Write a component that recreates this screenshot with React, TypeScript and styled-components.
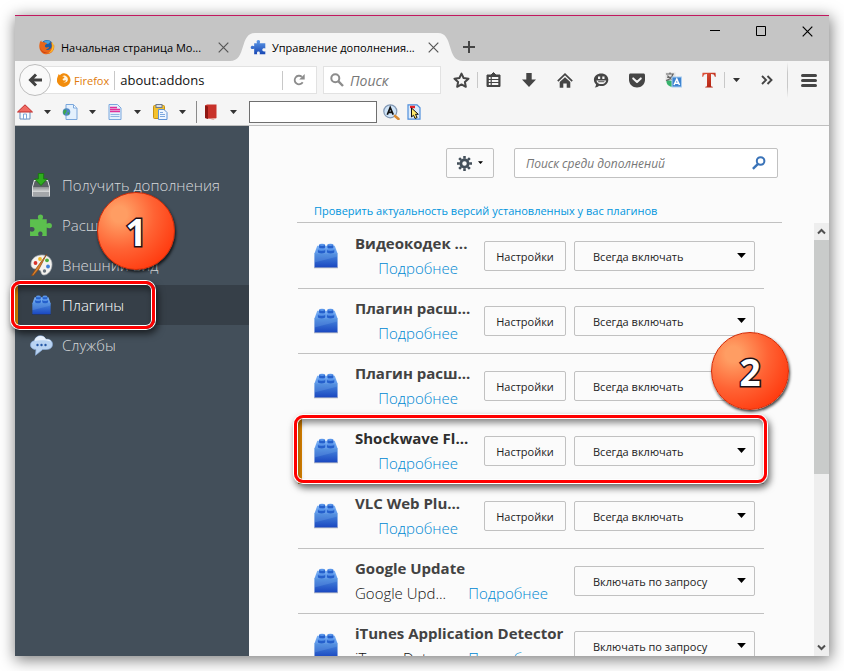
import React from "react";
import styled, { createGlobalStyle, css } from "styled-components";

const GlobalStyle = createGlobalStyle`
  *, *::before, *::after { box-sizing: border-box; }
  body {
    margin: 0;
    background: #fff;
    font-family: "Open Sans", "Noto Sans", sans-serif;
    font-size: 12px;
    color: #333;
  }
  button, input, select { font: inherit; color: inherit; margin: 0; }
  button { background: none; border: 0; padding: 0; }
  svg { display: block; flex: none; }
`;

/* ---------- window frame ---------- */

const Page = styled.div`
  height: 100vh;
  padding: 15px;
  overflow: hidden;
`;

const Window = styled.main`
  height: 100%;
  display: flex;
  flex-direction: column;
  background: #fbfbfb;
  border-top: 1px solid #c2185f;
  box-shadow: 1px 3px 14px 1px rgba(0, 0, 0, 0.5);
`;

const TitleBar = styled.header`
  height: 45px;
  flex: none;
  display: flex;
  align-items: flex-end;
  background: #c5c5c5;
`;

const TabButton = styled.div<{ $active?: boolean }>`
  position: relative;
  display: flex;
  align-items: center;
  width: ${(p) => (p.$active ? 233 : 215)}px;
  height: 28px;
  padding: 0 ${(p) => (p.$active ? 24 : 1)}px 0 ${(p) => (p.$active ? 20 : 24)}px;
`;

const TabShape = styled.span`
  position: absolute;
  inset: 0;
  display: flex;
`;

const TabFill = styled.span`
  flex: 1;
  background: #f5f5f5;
`;

const TabTitle = styled.button`
  position: relative;
  flex: 1;
  min-width: 0;
  display: flex;
  align-items: center;
  gap: 6px;
  font-size: 11px;
  color: #000;
  white-space: nowrap;
`;

const GlyphButton = styled.button`
  position: relative;
  display: flex;
  align-items: center;
  justify-content: center;
`;

const TabClose = styled(GlyphButton)`
  width: 12px;
  height: 12px;
  flex: none;
`;

const NewTab = styled(GlyphButton)`
  width: 12px;
  height: 28px;
`;

const WindowControls = styled.div`
  margin-left: auto;
  align-self: flex-start;
  display: flex;
`;

const ControlButton = styled(GlyphButton)`
  width: 46px;
  height: 30px;
  padding-left: 2px;
`;

/* ---------- toolbars ---------- */

const NavBar = styled.nav`
  height: 38px;
  flex: none;
  display: flex;
  align-items: center;
  padding-left: 4px;
  background: #f5f5f5;
`;

const BackButton = styled(GlyphButton)`
  width: 32px;
  height: 32px;
  flex: none;
  z-index: 1;
  border: 1px solid #bdbdbd;
  border-radius: 50%;
  background: #f9f9f9;
`;

const Field = styled.label`
  height: 28px;
  display: flex;
  align-items: center;
  background: #fff;
  border: 1px solid #e2e2e2;
`;

const AddressField = styled(Field)`
  flex: 1;
  min-width: 0;
  margin-left: -8px;
  padding: 0 11px 0 13px;
`;

const Identity = styled.span`
  margin: 0 5px 0 3px;
  font-size: 11px;
  color: #e07b0c;
`;

const Divider = styled.span<{ $h: number }>`
  width: 1px;
  height: ${(p) => p.$h}px;
  flex: none;
  background: #c8c8c8;
`;

const FadingDivider = styled(Divider)`
  background: linear-gradient(#c8c8c800, #c8c8c8 30%, #c8c8c8 70%, #c8c8c800);
`;

const BareInput = styled.input`
  flex: 1;
  min-width: 0;
  width: 0;
  padding: 0;
  border: 0;
  outline: 0;
  background: transparent;
  font-size: 13px;
  color: #111;
  &::placeholder { color: #777; opacity: 1; font-style: italic; }
`;

const AddressInput = styled(BareInput)`
  margin-left: 5px;
`;

const Reload = styled(GlyphButton)`
  margin-left: 10px;
`;

const QuickSearch = styled(Field)`
  width: 118px;
  margin: 0 4px 0 6px;
  padding: 0 6px;
  gap: 6px;
`;

const QuickSearchInput = styled(BareInput)`
  font-size: 14px;
`;

const ToolButton = styled(GlyphButton)<{ $w?: number; $gap?: number }>`
  width: ${(p) => p.$w ?? 36}px;
  height: 28px;
  flex: none;
  margin-left: ${(p) => p.$gap ?? 0}px;
`;

const ExtraBar = styled.div`
  height: 27px;
  flex: none;
  display: flex;
  align-items: center;
  background: #f5f5f5;
  border-bottom: 1px solid #bfbfbf;
`;

const ExtraDivider = styled.span`
  width: 1px;
  height: 22px;
  margin: 0 4px 0 1px;
  background: #8a8a8a;
`;

const ExtraInput = styled.input`
  width: 128px;
  height: 22px;
  margin: 0 2px 0 3px;
  border: 1px solid #6f6f6f;
  background: #fff;
`;

/* ---------- body ---------- */

const Body = styled.div`
  flex: 1;
  min-height: 0;
  display: flex;
`;

const Sidebar = styled.aside`
  position: relative;
  width: 234px;
  flex: none;
  padding-top: 39px;
  background: #434f5a;
`;

const Categories = styled.ul`
  list-style: none;
  margin: 0;
  padding: 0;
`;

const CategoryItem = styled.li`
  position: relative;
`;

const Category = styled.button<{ $active?: boolean }>`
  width: 100%;
  height: 40px;
  display: flex;
  align-items: center;
  gap: 9px;
  padding-left: 14px;
  font-size: 15px;
  font-weight: 300;
  color: #d8dadc;
  ${(p) =>
    p.$active &&
    css`
      padding-left: 11px;
      border-left: 3px solid #e08a00;
      background: #363f48;
      color: #fff;
    `}
`;

const CategoryIcon = styled.span`
  width: 24px;
  display: flex;
  justify-content: center;
`;

const Content = styled.section`
  flex: 1;
  min-width: 0;
  display: flex;
  flex-direction: column;
`;

const Header = styled.div`
  display: flex;
  justify-content: flex-end;
  gap: 20px;
  padding: 22px 51px 0 0;
`;

const boxed = css`
  height: 30px;
  border: 1px solid #c1c1c1;
  border-radius: 2px;
`;

const GearButton = styled.button`
  ${boxed}
  width: 48px;
  display: flex;
  align-items: center;
  justify-content: center;
  gap: 6px;
  background: #fbfbfb;
`;

const AddonSearch = styled.label`
  ${boxed}
  width: 264px;
  display: flex;
  align-items: center;
  padding: 0 11px;
  background: #fff;
`;

const AddonSearchInput = styled(BareInput)`
  font-size: 12px;
`;

const CheckRow = styled.div`
  height: 45px;
  flex: none;
  display: flex;
  align-items: flex-end;
  margin: 0 47px 0 48px;
  padding: 0 0 2px 17px;
  border-bottom: 1px solid #c1c1c1;
  line-height: 18px;
`;

const Link = styled.a`
  color: #0095dd;
  text-decoration: none;
  white-space: nowrap;
`;

const CheckLink = styled(Link)`
  font-size: 11px;
`;

const ListArea = styled.div`
  flex: 1;
  min-height: 0;
  display: flex;
`;

const Viewport = styled.div`
  position: relative;
  flex: 1;
  min-width: 0;
  overflow: hidden;
  padding: 1px 50px 0 49px;
`;

const Row = styled.article<{ $active?: boolean }>`
  position: relative;
  height: 65px;
  display: flex;
  align-items: center;
  padding: 0 9px 0 16px;
  border-bottom: 1px solid #c1c1c1;
  ${(p) =>
    p.$active &&
    css`
      padding-left: 12px;
      border-left: 4px solid #d98200;
    `}
`;

const Info = styled.div`
  flex: 1;
  min-width: 0;
  margin: 0 16px 0 17px;
`;

const Name = styled.h2<{ $active?: boolean }>`
  margin: 0;
  font-size: 15px;
  line-height: 25px;
  font-weight: 700;
  color: ${(p) => (p.$active ? "#2e2e2e" : "#424242")};
  white-space: nowrap;
`;

const Summary = styled.div`
  display: flex;
  padding-right: 10px;
  font-size: 15px;
  line-height: 25px;
`;

const Description = styled.span`
  flex: 1;
  min-width: 0;
  white-space: nowrap;
  font-weight: 300;
  color: #111;
`;

const DetailsLink = styled(Link)`
  font-weight: 300;
  color: #0088d2;
`;

const SettingsButton = styled.button`
  ${boxed}
  width: 82px;
  flex: none;
  margin-right: 8px;
  background: #fbfbfb;
  font-size: 11px;
  color: #222;
`;

const Picker = styled.label`
  display: grid;
  width: 181px;
  flex: none;
  align-items: center;
  & > * { grid-area: 1 / 1; }
  & > svg { justify-self: end; margin-right: 9px; pointer-events: none; }
`;

const PickerSelect = styled.select`
  ${boxed}
  width: 100%;
  padding: 1px 28px 0 18px;
  appearance: none;
  background: #fbfbfb;
  font-size: 11px;
  color: #222;
`;

const ScrollTrack = styled.div`
  width: 15px;
  flex: none;
  display: flex;
  flex-direction: column;
  align-items: center;
  background: #eeeeee;
`;

const ScrollButton = styled(GlyphButton)`
  width: 15px;
  height: 17px;
  flex: none;
`;

const ScrollThumb = styled.div`
  width: 100%;
  margin: 0 0 auto;
  flex: 0 1 234px;
  background: #c9cbca;
`;

/* ---------- callouts ---------- */

const Callout = styled.span`
  position: absolute;
  pointer-events: none;
  border: 3px solid #f00;
  border-radius: 9px;
  box-shadow:
    0 0 0 1px #fff,
    inset 0 0 0 1px #fff,
    2px 4px 7px 1px rgba(0, 0, 0, 0.6),
    inset 1px 5px 6px 0 rgba(0, 0, 0, 0.45);
`;

const CategoryCallout = styled(Callout)`
  inset: -4px 94px -4px -4px;
`;

const RowCallout = styled(Callout)`
  inset: -4px -3px 0 -8px;
`;

const Badge = styled.span`
  position: absolute;
  z-index: 2;
  width: 78px;
  height: 78px;
  display: flex;
  align-items: center;
  justify-content: center;
  border: 1px solid #d42a05;
  border-radius: 50%;
  background: radial-gradient(circle at 28% 28%, #ff9d63 0, #ff9d63 10%, #ff6334 45%, #ff2a00 95%);
  box-shadow: 1px 2px 3px rgba(0, 0, 0, 0.75);
  font: 700 37px/1 "Noto Sans", sans-serif;
  color: #fff;
  -webkit-text-stroke: 3px #1c1018;
  paint-order: stroke fill;
`;

const BadgeOne = styled(Badge)`
  top: 66px;
  left: 82px;
`;

const BadgeTwo = styled(Badge)`
  top: 109px;
  right: 25px;
`;

/* ---------- icons ---------- */

const PUZZLE =
  "M5 6h4.2C8 4.4 8.300 1.500 11 1.500s3 2.900 1.800 4.500H17v4.400c1.700-1.300 5-1 5 1.700s-3.300 3-5 1.700V22h-4.500c1-2 .5-4.200-1.600-4.200S8.300 20 9.300 22H1v-4.500c2 .8 4.300.4 4.300-1.900S3 12.900 1 13.700V6z";

const TabWing = ({ flip }: { flip?: boolean }) => (
  <svg width="25" height="28" viewBox="0 0 25 28">
    <path
      d={flip ? "M0 0C16 0 8 28 25 28H0z" : "M25 0C9 0 17 28 0 28H25z"}
      fill="#f5f5f5"
    />
  </svg>
);

const FirefoxIcon = () => (
  <svg width="16" height="16" viewBox="0 0 16 16">
    <circle cx="8" cy="7.600" r="6.600" fill="#1b5fa8" />
    <path d="M5 2.500c2-1.500 5-1.300 6.500.2l-2 2-3 .3z" fill="#4ba3de" />
    <path d="M.6 4.500C.9 3 1.700 2 2.300 1.600c0 .7.300 1.200.7 1.500 1-.3 2-.1 2.800.5L7.800 4c.3.900-1 1.300-1.600 1.900-.3.600.1 1.200-.3 1.700.9 1.500 3 .9 4 .4.500.8-.9 2.400-3 2.400 2 1.300 5.200.3 5.700-2.600.3-1.900-.3-3.300-1.400-4.700 3 1.600 3.300 3.600 3.300 3.600l.6-1c.6 3-.3 5.700-2.300 7.600-2.700 2.500-7 2.600-9.800.4C.5 11.500-.3 8 .6 4.500z" fill="#e8661b" />
    <path d="M12.500 2.600c2.700 2.300 3 6 1.600 8.500-1.200 2-3 3-5 3.200 3.300-1.700 5.300-5.800 3.400-11.700z" fill="#fbbf2c" />
    <path d="M1 8c1 4 4 5.700 7.500 5.600-2.500 1.400-6.800-.2-7.500-5.600z" fill="#c43a17" />
  </svg>
);

const FirefoxMono = () => (
  <svg width="14" height="14" viewBox="0 0 14 14">
    <path d="M.4 4.500 1.700 1l1.200 1.300C4.100.9 5.500.3 7.200.3a6.800 6.800 0 1 1-6.800 4.200z" fill="#f28c0c" />
    <path d="M5.200 3.200c1.300.3 2 .8 2.300 1.500L5.600 6c0 1 .6 1.600 1.700 1.600l1.700-.4c0 1.200-1 1.900-2.700 1.900 2 1 4.600-.4 4.600-2.700 0-1.600-.9-2.800-2.500-3.600-1.100-.4-2.200-.2-3.200.4z" fill="#fff3dd" />
  </svg>
);

const BluePuzzle = () => (
  <svg width="16" height="16" viewBox="0 0 23 23">
    <defs>
      <linearGradient id="bp" x1="0" y1="0" x2="0" y2="1">
        <stop offset="0" stopColor="#5f9ae8" />
        <stop offset="1" stopColor="#1747b4" />
      </linearGradient>
    </defs>
    <path d={PUZZLE} fill="url(#bp)" transform="translate(23 0) scale(-1 1)" />
  </svg>
);

const Cross = ({ color = "#555" }: { color?: string }) => (
  <svg width="11" height="11" viewBox="0 0 11 11">
    <path d="M.7.7l9.600 9.600M10.300.7L.7 10.300" stroke={color} strokeWidth="1.200" />
  </svg>
);

const Caret = ({ w = 8, color = "#333" }: { w?: number; color?: string }) => (
  <svg width={w} height={w / 2 + 1} viewBox="0 0 8 5">
    <path d="M0 0h8L4 4.600z" fill={color} />
  </svg>
);

const BackArrow = () => (
  <svg width="14" height="14" viewBox="0 0 14 14">
    <path d="M8 1.500 2.500 7 8 12.500M2.500 7H14" fill="none" stroke="#404040" strokeWidth="3" />
  </svg>
);

const ReloadIcon = () => (
  <svg width="12" height="12" viewBox="0 0 12 12">
    <path d="M9.700 8.200A4.300 4.300 0 1 1 8.800 2.800" fill="none" stroke="#8c8c8c" strokeWidth="1.800" />
    <path d="M11.700 0v5.500H6.200z" fill="#8c8c8c" />
  </svg>
);

const Lens = () => (
  <svg width="14" height="14" viewBox="0 0 14 14">
    <circle cx="5.300" cy="5.300" r="4" fill="none" stroke="#8c8c8c" strokeWidth="2" />
    <path d="M8.200 8.200 13 13" stroke="#8c8c8c" strokeWidth="2.400" />
  </svg>
);

const BlueLens = () => (
  <svg width="14" height="14" viewBox="0 0 14 14">
    <circle cx="8.600" cy="5" r="3.800" fill="none" stroke="#3a73b8" strokeWidth="2" />
    <path d="M6 7.800.9 12.900" stroke="#3a73b8" strokeWidth="2.400" />
  </svg>
);

const Star = () => (
  <svg width="17" height="16" viewBox="0 0 17 16">
    <path d="M8.500 1.600l2.100 4.400 4.900.7-3.600 3.300.9 4.800-4.300-2.400-4.300 2.400.9-4.800L1.500 6.700l4.900-.7z" fill="none" stroke="#454545" strokeWidth="2" strokeLinejoin="round" />
  </svg>
);

const Clipboard = () => (
  <svg width="15" height="16" viewBox="0 0 15 16">
    <path d="M1 3h4L7.500.5 10 3h4v11.500H1z" fill="#454545" stroke="#454545" strokeWidth="1" strokeLinejoin="round" />
    <path d="M2.800 5h1.800v2H2.800zm3 0h6.500v2H5.800zm-3 3h1.800v2H2.800zm3 0h6.500v2H5.800zm-3 3h1.800v2H2.800zm3 0h6.500v2H5.800z" fill="#f5f5f5" />
  </svg>
);

const DownArrow = () => (
  <svg width="14" height="14" viewBox="0 0 14 14">
    <path d="M4.300 0h5.400v6.500H14L7 14 0 6.500h4.300z" fill="#454545" />
  </svg>
);

const HomeIcon = () => (
  <svg width="16" height="15" viewBox="0 0 16 15">
    <path d="M.8 8.200 8 1.200l7.200 7" fill="none" stroke="#454545" strokeWidth="1.700" />
    <path d="M8 4.200 13.300 9v5.700H9.700v-4.200H6.300v4.200H2.700V9z" fill="#454545" />
  </svg>
);

const Smile = () => (
  <svg width="16" height="15" viewBox="0 0 16 15">
    <path d="M8.300.5c4 0 7 2.700 7 6.200s-3 6.400-7 6.400c-.8 0-1.600-.1-2.300-.3-1 1-2.400 1.700-4.300 1.700.8-.7 1.300-1.700 1.400-3C2 10.300.9 8.700.9 6.700.9 3.200 4.200.5 8.300.5z" fill="#454545" />
    <path d="M5 3.500h2.200v2.600H5zm4.300 0h2.200v2.600H9.300zM3.400 7.400h9.800c-.4 2.200-2.400 3.700-4.900 3.700s-4.500-1.500-4.900-3.700z" fill="#f5f5f5" />
    <path d="M5.200 8.700h6.200" stroke="#454545" strokeWidth=".9" />
  </svg>
);

const Pocket = () => (
  <svg width="16" height="15" viewBox="0 0 16 15">
    <path d="M1.600.6h12.800c1 0 1.600.6 1.600 1.600v4.500c0 4.500-3.500 7.700-8 7.700s-8-3.200-8-7.700V2.200C0 1.200.6.6 1.600.6z" fill="#454545" />
    <path d="M4.200 5.400 8 9l3.800-3.600" fill="none" stroke="#f5f5f5" strokeWidth="2" strokeLinecap="round" strokeLinejoin="round" />
  </svg>
);

const Translate = () => (
  <svg width="17" height="16" viewBox="0 0 17 16">
    <rect x=".5" y=".5" width="10" height="9" fill="#e4e4e4" />
    <path d="M1.500 8c-.6 4 2 7 7 7l-.5-6z" fill="#37b36c" />
    <path d="M1 2h8M5 .5V2M2.500 3.500c2 3 4 4 6.500 4.500M7.800 2.500C7 5.500 4.500 7.500 1 8.500M2.200 5.300h6" fill="none" stroke="#666" strokeWidth="1.200" />
    <rect x="7" y="5" width="9.500" height="10" fill="#3f84d0" stroke="#a9cdf0" />
    <path d="M9 13l2.800-6 2.700 6M10 11.200h3.600" fill="none" stroke="#fff" strokeWidth="1.500" />
  </svg>
);

const TypeIcon = () => (
  <svg width="14" height="16" viewBox="0 0 14 16">
    <defs>
      <linearGradient id="ty" x1="0" y1="0" x2="1" y2="1">
        <stop offset="0" stopColor="#e2563e" />
        <stop offset="1" stopColor="#a61505" />
      </linearGradient>
    </defs>
    <path d="M.5.700h13l.3 4h-1c-.4-2-1.200-2.700-3.800-2.700v11.500c0 1 .5 1.200 1.800 1.300v.8H3.200v-.8c1.300-.1 1.800-.3 1.800-1.300V2C2.400 2 1.600 2.700 1.200 4.700h-1z" fill="url(#ty)" />
  </svg>
);

const Chevrons = () => (
  <svg width="12" height="10" viewBox="0 0 12 10">
    <path d="M1 1l4 4-4 4M6.500 1l4 4-4 4" fill="none" stroke="#454545" strokeWidth="1.900" />
  </svg>
);

const Burger = () => (
  <svg width="16" height="13" viewBox="0 0 16 13">
    <path d="M1.500 1.500h13M1.500 6.500h13M1.500 11.500h13" stroke="#454545" strokeWidth="3" strokeLinecap="round" />
  </svg>
);

const RedHome = () => (
  <svg width="16" height="16" viewBox="0 0 16 16">
    <path d="M3 7v8h10V7z" fill="#f5faff" stroke="#6b8fc0" />
    <path d="M6.500 10h3v5h-3z" fill="#fff" stroke="#7ea6d8" />
    <path d="M8 .8 15.500 8H.5z" fill="#f06a62" stroke="#c22d2d" strokeLinejoin="round" />
  </svg>
);

const GlobePage = () => (
  <svg width="16" height="16" viewBox="0 0 16 16">
    <path d="M4 .5h7.500L15 4v11.500H4z" fill="#e3f0fd" stroke="#7aa7dc" />
    <path d="M11.500 1v3H15" fill="#fff" stroke="#7aa7dc" />
    <circle cx="4.500" cy="8" r="3.800" fill="#4f86c6" />
    <path d="M2 6c2-1.500 3 0 2.500 1.500S2.500 9.500 3 11C1 10 .8 7.500 2 6zM5.500 8.500c1.500-.5 2 .5 1.500 2H5.500z" fill="#3ea84a" />
  </svg>
);

const TextPage = () => (
  <svg width="14" height="16" viewBox="0 0 14 16">
    <path d="M1 .5h8.500L13 4v11.500H1z" fill="#e3f0fd" stroke="#7aa7dc" />
    <path d="M2 3.500h7M2 5.500h10M2 7.500h10" stroke="#e0309a" strokeWidth="1.600" />
    <path d="M2.500 10.500h9M2.500 12.500h9" stroke="#8fb4e2" />
  </svg>
);

const PastePage = () => (
  <svg width="16" height="16" viewBox="0 0 16 16">
    <rect x="1.500" y="1.500" width="11" height="13" rx="1" fill="#f4c22e" stroke="#c79213" />
    <rect x="4" y=".5" width="6" height="3" fill="#d9dee6" stroke="#6d7a8c" />
    <path d="M6.500 5.500h5.500l3 3v7H6.500z" fill="#eef6ff" stroke="#5f93d6" />
    <path d="M8 8.500h3M8 10.500h5M8 12.500h5" stroke="#7fa9de" />
  </svg>
);

const RedBook = () => (
  <svg width="14" height="16" viewBox="0 0 14 16">
    <path d="M1 1.500 3 .5h9.500v13.500L9.500 15.500 1 14z" fill="#c8322a" />
    <path d="M1 1.500l3 1V15L1 14z" fill="#8f1712" />
    <path d="M12.500 14 9.500 15.500 4 14.700z" fill="#e8c9c4" />
  </svg>
);

const LetterLens = () => (
  <svg width="17" height="16" viewBox="0 0 17 16">
    <circle cx="7.300" cy="7.300" r="6.500" fill="#cfe4f8" stroke="#8298b4" strokeWidth="1.200" />
    <path d="M4.300 10.700 7.200 3.500l3 7.200M5.400 8.300h3.700" fill="none" stroke="#111" strokeWidth="1.700" />
    <path d="M12 12l3.500 3" stroke="#d88a33" strokeWidth="2.600" strokeLinecap="round" />
  </svg>
);

const CursorPage = () => (
  <svg width="14" height="16" viewBox="0 0 14 16">
    <path d="M1 .8h9l3 3v11.400H1z" fill="#dcebfb" stroke="#4f8fdc" strokeWidth="1.200" />
    <path d="M3 3h5" stroke="#e8232a" strokeWidth="2.400" />
    <path d="M4.500 4v9l2-1.800 1.600 3.300 2-1-1.600-3.200h2.800z" fill="#ffe96b" stroke="#111" />
  </svg>
);

const Brick = ({ w = 26 }: { w?: number }) => (
  <svg width={w} height={(w * 28) / 26} viewBox="0 0 26 28">
    <defs>
      <linearGradient id="bk" x1="0" y1="0" x2="0" y2="1">
        <stop offset="0" stopColor="#4a8ade" />
        <stop offset="1" stopColor="#1a47c0" />
      </linearGradient>
      <linearGradient id="bs" x1="0" y1="0" x2="0" y2="1">
        <stop offset="0" stopColor="#7db2f4" />
        <stop offset="1" stopColor="#5b97ea" />
      </linearGradient>
    </defs>
    <path d="M0 26h26v1.500H0z" fill="#000" opacity=".2" />
    <path d="M3.500 3h19L25.500 11.500H.5z" fill="url(#bs)" />
    <path d="M.5 11h25v15.500H.5z" fill="url(#bk)" />
    <path d="M.5 11h25v3.500L.5 21z" fill="#7fb2f0" opacity=".25" />
    <g fill="#2560cc">
      <path d="M5.500 2h6.500v3a3.250 1.500 0 0 1-6.500 0zM14.500 2h6.500v3a3.250 1.500 0 0 1-6.500 0z" />
      <path d="M4.200 7h8v2.500a4 1.800 0 0 1-8 0zM14 7h8v2.500a4 1.800 0 0 1-8 0z" />
    </g>
    <g fill="#5a96ea">
      <ellipse cx="8.750" cy="2" rx="3.200" ry="1.200" />
      <ellipse cx="17.750" cy="2" rx="3.200" ry="1.200" />
      <ellipse cx="8.200" cy="7" rx="4" ry="1.300" />
      <ellipse cx="18" cy="7" rx="4" ry="1.300" />
    </g>
  </svg>
);

const GetAddons = () => (
  <svg width="20" height="25" viewBox="0 0 20 25">
    <defs>
      <linearGradient id="ga" x1="0" y1="0" x2="0" y2="1">
        <stop offset="0" stopColor="#8d9092" />
        <stop offset="1" stopColor="#dadcdd" />
      </linearGradient>
    </defs>
    <path d="M3 7h14l2 7v9.500H1V14z" fill="#e9eaea" />
    <path d="M3.700 8h12.600l1.700 6H2z" fill="#5a6064" />
    <path d="M1.800 14h16.400v5H1.800z" fill="url(#ga)" />
    <path d="M1.800 19h16.400v4H1.800z" fill="#a4a7aa" />
    <path d="M7.300.5h5.400v5.500h3.600L10 12.500 3.700 6h3.600z" fill="#2fae1f" stroke="#197a10" />
  </svg>
);

const GreenPuzzle = () => (
  <svg width="24" height="24" viewBox="0 0 23 23">
    <path d={PUZZLE} fill="#5cc04e" />
  </svg>
);

const Palette = () => (
  <svg width="23" height="22" viewBox="0 0 23 22">
    <path d="M12 1c6 0 10 3.700 10 9.300 0 5.700-3.500 10.700-8.200 10.700-3.300 0-1.800-3.700-4.300-5S1 15.800 1 10.300C1 4.700 6 1 12 1z" fill="#f4f2ee" stroke="#aeb3b8" strokeWidth=".7" />
    <circle cx="5.500" cy="9" r="1.900" fill="#d8322a" />
    <circle cx="10" cy="5" r="1.900" fill="#efb823" />
    <circle cx="17" cy="6.300" r="1.900" fill="#4fb03c" />
    <circle cx="18" cy="12.500" r="1.900" fill="#3f7fd8" />
    <circle cx="14.500" cy="17" r="1.700" fill="#6a737c" />
    <path d="M16.500.5 6.500 14 1.500 21.500l1.700.3L9 15z" fill="#d9822b" stroke="#8a4311" strokeWidth=".7" />
  </svg>
);

const Speech = () => (
  <svg width="23" height="21" viewBox="0 0 23 21">
    <path d="M6 14.500c-3 0-5.500-1.700-5.500-4.500S2.700 5.800 4.500 5.800C5 2.800 7.300.7 10.300.7c2.700 0 4.800 1.500 5.600 3.700 4-.7 6.600 1.700 6.600 4.900s-2.500 5.200-6 5.200h-3.800L5.500 20.300z" fill="#b9d3f2" stroke="#88abd8" strokeWidth=".7" />
    <path d="M4 5.900c3-.5 11-1.500 17 .6-1-1.700-3-2.400-5.100-2.100C14.500-.3 5.500-.2 4.500 5.800z" fill="#e6f0fc" />
    <g fill="#2457a6">
      <circle cx="7.500" cy="10" r="1.200" />
      <circle cx="11.500" cy="10" r="1.200" />
      <circle cx="15.500" cy="10" r="1.200" />
    </g>
  </svg>
);

const Gear = () => (
  <svg width="15" height="15" viewBox="0 0 16 16">
    <circle cx="8" cy="8" r="3.900" fill="none" stroke="#434f5a" strokeWidth="3" />
    <path d="M8 0v3M8 13v3M0 8h3M13 8h3M2.300 2.300l2.200 2.200M11.500 11.500l2.200 2.200M2.300 13.700l2.200-2.200M11.500 4.500l2.200-2.200" stroke="#434f5a" strokeWidth="2.700" />
  </svg>
);

const Arrow = ({ down }: { down?: boolean }) => (
  <svg width="9" height="7" viewBox="0 0 9 7">
    <path d={down ? "M1 1.500l3.500 3.500L8 1.500" : "M1 5.500 4.500 2 8 5.500"} fill="none" stroke="#505050" strokeWidth="2" />
  </svg>
);

/* ---------- data ---------- */

const categories = [
  { label: "Получить дополнения", icon: <GetAddons /> },
  { label: "Расширения", icon: <GreenPuzzle /> },
  { label: "Внешний вид", icon: <Palette /> },
  { label: "Плагины", icon: <Brick w={19} />, active: true },
  { label: "Службы", icon: <Speech /> },
];

const ALWAYS = "Всегда включать";
const ASK = "Включать по запросу";

type Plugin = {
  name: string;
  about?: string;
  mode: string;
  settings?: boolean;
  active?: boolean;
};

const plugins: Plugin[] = [
  { name: "Видеокодек ...", mode: ALWAYS, settings: true },
  { name: "Плагин расш...", mode: ALWAYS, settings: true },
  { name: "Плагин расш...", mode: ALWAYS, settings: true },
  { name: "Shockwave Fl...", mode: ALWAYS, settings: true, active: true },
  { name: "VLC Web Plu...", mode: ALWAYS, settings: true },
  { name: "Google Update", about: "Google Upd...", mode: ASK },
  { name: "iTunes Application Detector", about: "iTunes Dete...", mode: ASK },
];

const extraTools = [
  { label: "Домой", icon: <RedHome /> },
  { label: "Страница", icon: <GlobePage /> },
  { label: "Текст", icon: <TextPage /> },
  { label: "Вставить", icon: <PastePage /> },
];

const PluginRow = ({ plugin }: { plugin: Plugin }) => (
  <Row $active={plugin.active}>
    <Brick w={24} />
    <Info>
      <Name $active={plugin.active}>{plugin.name}</Name>
      <Summary>
        <Description>{plugin.about}</Description>
        <DetailsLink href="#more">Подробнее</DetailsLink>
      </Summary>
    </Info>
    {plugin.settings && <SettingsButton>Настройки</SettingsButton>}
    <Picker>
      <PickerSelect aria-label={plugin.name} defaultValue={plugin.mode}>
        <option>{ALWAYS}</option>
        <option>{ASK}</option>
      </PickerSelect>
      <Caret w={9} color="#000" />
    </Picker>
    {plugin.active && <RowCallout />}
  </Row>
);

export default function App() {
  return (
    <Page>
      <GlobalStyle />
      <Window>
        <TitleBar>
          <TabButton>
            <TabTitle>
              <FirefoxIcon />
              Начальная страница Mo...
            </TabTitle>
            <TabClose aria-label="Закрыть вкладку"><Cross /></TabClose>
          </TabButton>
          <TabButton $active>
            <TabShape>
              <TabWing />
              <TabFill />
              <TabWing flip />
            </TabShape>
            <TabTitle>
              <BluePuzzle />
              Управление дополнения...
            </TabTitle>
            <TabClose aria-label="Закрыть вкладку"><Cross /></TabClose>
          </TabButton>
          <NewTab aria-label="Новая вкладка">
            <svg width="12" height="12" viewBox="0 0 12 12">
              <path d="M6 0v12M0 6h12" stroke="#454545" strokeWidth="2" />
            </svg>
          </NewTab>
          <WindowControls>
            <ControlButton aria-label="Свернуть">
              <svg width="10" height="10" viewBox="0 0 10 10"><path d="M0 4.500h10" stroke="#000" /></svg>
            </ControlButton>
            <ControlButton aria-label="Развернуть">
              <svg width="10" height="10" viewBox="0 0 10 10"><path d="M.5.500h9v9h-9z" fill="none" stroke="#000" /></svg>
            </ControlButton>
            <ControlButton aria-label="Закрыть"><Cross color="#000" /></ControlButton>
          </WindowControls>
        </TitleBar>

        <NavBar>
          <BackButton aria-label="Назад"><BackArrow /></BackButton>
          <AddressField>
            <FirefoxMono />
            <Identity>Firefox</Identity>
            <Divider $h={19} />
            <AddressInput aria-label="Адрес" defaultValue="about:addons" />
            <Divider $h={19} />
            <Reload aria-label="Обновить"><ReloadIcon /></Reload>
          </AddressField>
          <QuickSearch>
            <Lens />
            <QuickSearchInput aria-label="Поиск" placeholder="Поиск" />
          </QuickSearch>
          <ToolButton $w={32} aria-label="Добавить в закладки"><Star /></ToolButton>
          <Divider $h={16} />
          <ToolButton $w={30} aria-label="Закладки"><Clipboard /></ToolButton>
          <ToolButton $gap={3} aria-label="Загрузки"><DownArrow /></ToolButton>
          <ToolButton aria-label="Домашняя страница"><HomeIcon /></ToolButton>
          <ToolButton aria-label="Чат"><Smile /></ToolButton>
          <ToolButton aria-label="Pocket"><Pocket /></ToolButton>
          <ToolButton aria-label="Перевести"><Translate /></ToolButton>
          <ToolButton $w={30} $gap={3} aria-label="Шрифт"><TypeIcon /></ToolButton>
          <Divider $h={16} />
          <ToolButton $w={22} aria-label="Параметры шрифта"><Caret w={7} /></ToolButton>
          <ToolButton $w={40} aria-label="Ещё"><Chevrons /></ToolButton>
          <FadingDivider $h={36} />
          <ToolButton $w={41} aria-label="Меню"><Burger /></ToolButton>
        </NavBar>

        <ExtraBar>
          {extraTools.map((t) => (
            <React.Fragment key={t.label}>
              <ToolButton $w={20} aria-label={t.label}>{t.icon}</ToolButton>
              <ToolButton $w={25} aria-label={`${t.label}: меню`}><Caret w={7} /></ToolButton>
            </React.Fragment>
          ))}
          <ExtraDivider />
          <ToolButton $w={20} aria-label="Словарь"><RedBook /></ToolButton>
          <ToolButton $w={25} aria-label="Словарь: меню"><Caret w={7} /></ToolButton>
          <ExtraInput aria-label="Слово" />
          <ToolButton $w={25} aria-label="Найти слово"><LetterLens /></ToolButton>
          <ToolButton $w={20} aria-label="Выделить"><CursorPage /></ToolButton>
        </ExtraBar>

        <Body>
          <Sidebar>
            <Categories>
              {categories.map((c) => (
                <CategoryItem key={c.label}>
                  <Category $active={c.active}>
                    <CategoryIcon>{c.icon}</CategoryIcon>
                    {c.label}
                  </Category>
                  {c.active && <CategoryCallout />}
                </CategoryItem>
              ))}
            </Categories>
            <BadgeOne>1</BadgeOne>
          </Sidebar>

          <Content>
            <Header>
              <GearButton aria-label="Инструменты">
                <Gear />
                <Caret w={5} color="#000" />
              </GearButton>
              <AddonSearch>
                <AddonSearchInput aria-label="Поиск среди дополнений" placeholder="Поиск среди дополнений" />
                <BlueLens />
              </AddonSearch>
            </Header>
            <CheckRow>
              <CheckLink href="#check">Проверить актуальность версий установленных у вас плагинов</CheckLink>
            </CheckRow>
            <ListArea>
              <Viewport>
                {plugins.map((p, i) => (
                  <PluginRow key={i} plugin={p} />
                ))}
                <BadgeTwo>2</BadgeTwo>
              </Viewport>
              <ScrollTrack>
                <ScrollButton aria-label="Вверх"><Arrow /></ScrollButton>
                <ScrollThumb />
                <ScrollButton aria-label="Вниз"><Arrow down /></ScrollButton>
              </ScrollTrack>
            </ListArea>
          </Content>
        </Body>
      </Window>
    </Page>
  );
}
